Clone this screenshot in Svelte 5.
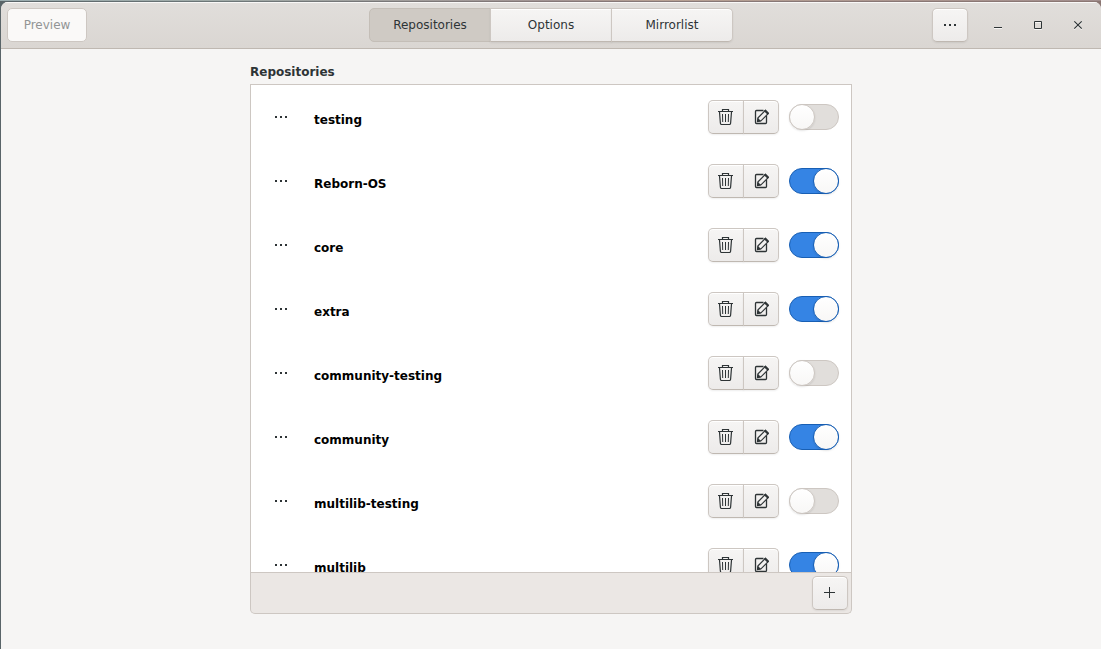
<script lang="ts">
	interface Repo {
		name: string;
		enabled: boolean;
	}

	const tabs = ['Repositories', 'Options', 'Mirrorlist'];

	let activeTab = $state('Repositories');
	let repos = $state<Repo[]>([
		{ name: 'testing', enabled: false },
		{ name: 'Reborn-OS', enabled: true },
		{ name: 'core', enabled: true },
		{ name: 'extra', enabled: true },
		{ name: 'community-testing', enabled: false },
		{ name: 'community', enabled: true },
		{ name: 'multilib-testing', enabled: false },
		{ name: 'multilib', enabled: true }
	]);

	function remove(repo: Repo): void {
		repos = repos.filter((r) => r !== repo);
	}
</script>

{#snippet dots()}
	<svg viewBox="0 0 16 16" aria-hidden="true">
		<path d="M2 7h2v2H2zM7 7h2v2H7zM12 7h2v2h-2z" fill="currentColor" />
	</svg>
{/snippet}

<div class="desktop">
	<div class="window">
		<header>
			<div class="start">
				<button class="btn preview" disabled>Preview</button>
			</div>

			<nav class="linked">
				{#each tabs as tab}
					<button
						class="btn tab"
						class:active={tab === activeTab}
						aria-pressed={tab === activeTab}
						onclick={() => (activeTab = tab)}>{tab}</button
					>
				{/each}
			</nav>

			<div class="end">
				<button class="btn icon" aria-label="Menu">{@render dots()}</button>
				<div class="controls">
					<button class="flat" aria-label="Minimize">
						<svg viewBox="0 0 16 16"><path d="M4 10h8v1H4z" fill="currentColor" /></svg>
					</button>
					<button class="flat" aria-label="Maximize">
						<svg viewBox="0 0 16 16">
							<path d="M4.5 4.5h7v7h-7z" fill="none" stroke="currentColor" />
						</svg>
					</button>
					<button class="flat" aria-label="Close">
						<svg viewBox="0 0 16 16">
							<path
								d="M4.3 4.3l7.4 7.4M11.700 4.3l-7.400 7.400"
								fill="none"
								stroke="currentColor"
								stroke-width="1.2"
							/>
						</svg>
					</button>
				</div>
			</div>
		</header>

		<main>
			<h1>Repositories</h1>
			<ul>
				{#each repos as repo, i (repo.name)}
					<li>
						<button class="flat handle" aria-label="Move {repo.name}">{@render dots()}</button>
						<label for="repo-{i}">{repo.name}</label>
						<div class="linked">
							<button
								class="btn icon"
								aria-label="Delete {repo.name}"
								onclick={() => remove(repo)}
							>
								<svg viewBox="0 0 16 16" fill="none" stroke="currentColor">
									<path d="M0 2.5h15M4.5 2.5v-2h6v2" stroke-width="1.2" />
									<path
										d="M1.5 3l.9 11.300q.1 1.200 1.200 1.200h7.800q1.100 0 1.200-1.200l.9-11.300"
										stroke-width="1.200"
									/>
									<path d="M4.500 5l.2 8M7.500 5v8M10.500 5l-.2 8" />
								</svg>
							</button>
							<button class="btn icon" aria-label="Edit {repo.name}">
								<svg viewBox="0 0 16 16" fill="none" stroke="currentColor">
									<path
										d="M10.500 1.500h-7q-1 0-1 1v11q0 1 1 1h9q1 0 1-1v-6.500"
										stroke-width="1.300"
									/>
									<path d="M4.500 12.500l.5-3.700 7.400-7.400 3 3-7.400 7.400z" stroke-width="1.200" />
									<path
										d="M4 13l.7-4.300 3.600 3.600zM10.800 2l1.700-1.500 3.500 3.500-1.600 1.600z"
										fill="currentColor"
										stroke="none"
									/>
								</svg>
							</button>
						</div>
						<input id="repo-{i}" type="checkbox" role="switch" bind:checked={repo.enabled} />
					</li>
				{/each}
			</ul>
			<footer>
				<button class="btn icon" aria-label="Add repository">
					<svg viewBox="0 0 16 16"><path d="M7 2h1v5h5v1H8v5H7V8H2V7h5z" fill="currentColor" /></svg>
				</button>
			</footer>
		</main>
	</div>
</div>

<style>
	:global(body) {
		margin: 0;
	}

	.desktop {
		box-sizing: border-box;
		height: 100vh;
		padding: 2px 0 0 1px;
		background:
			linear-gradient(90deg, #9aacaf, #a0aaa7 20%, #a29493 50%, #b8a193 60%, #a18d8c) top / 100% 1px
				no-repeat,
			linear-gradient(90deg, #596468, #6d7778 20%, #857878 50%, #8b7773);
		font-family: 'DejaVu Sans', sans-serif;
		font-size: 12px;
		line-height: 16px;
		color: #2e3436;
	}

	.window {
		display: flex;
		flex-direction: column;
		height: 100%;
		background: #f6f5f4;
		border-radius: 7px 7px 0 0;
		overflow: hidden;
	}

	header {
		display: grid;
		grid-template-columns: 1fr auto 1fr;
		align-items: center;
		padding: 6px;
		background: linear-gradient(#e1dedb, #dad6d2);
		border-bottom: 1px solid #bfb8b1;
		box-shadow: inset 0 1px #f9f8f7;
	}

	.start,
	.end,
	.controls,
	.linked {
		display: flex;
	}

	.end {
		justify-content: flex-end;
		gap: 13px;
	}

	.controls {
		gap: 6px;
	}

	button {
		box-sizing: border-box;
		height: 34px;
		margin: 0;
		padding: 0;
		font: inherit;
		color: inherit;
	}

	svg {
		display: block;
		width: 16px;
		height: 16px;
		margin: auto;
	}

	.btn {
		border: 1px solid #cdc7c2;
		border-bottom-color: #bfb8b1;
		border-radius: 5px;
		background: linear-gradient(#f6f5f4, #edebea);
		box-shadow:
			inset 0 1px #fff,
			0 1px 2px rgba(0, 0, 0, 0.07);
	}

	.btn.icon {
		width: 36px;
	}

	.preview {
		width: 80px;
		border-color: #cdc7c2;
		background: #faf9f8;
		box-shadow: none;
		color: #929595;
	}

	.tab {
		width: 122px;
	}

	.tab.active {
		background: #cfcac4;
		border-color: #c4beb7;
		box-shadow: none;
	}

	.linked .btn + .btn {
		margin-left: -1px;
	}

	.linked .btn:not(:first-child) {
		border-top-left-radius: 0;
		border-bottom-left-radius: 0;
	}

	.linked .btn:not(:last-child) {
		border-top-right-radius: 0;
		border-bottom-right-radius: 0;
	}

	.flat {
		width: 34px;
		border: 0;
		background: none;
	}

	.controls svg {
		filter: drop-shadow(0 1px rgba(255, 255, 255, 0.75));
	}

	main {
		flex: 1;
		min-height: 0;
		display: flex;
		flex-direction: column;
		box-sizing: border-box;
		width: 100%;
		max-width: 602px;
		margin: 0 auto;
		padding: 15px 0 35px;
	}

	h1 {
		margin: 0 0 4px;
		font-size: 12px;
		line-height: 16px;
	}

	ul {
		flex: 1;
		min-height: 0;
		margin: 0;
		padding: 0;
		list-style: none;
		overflow-y: auto;
		scrollbar-width: none;
		background: #fff;
		border: 1px solid #cdc7c2;
	}

	li {
		display: flex;
		align-items: center;
		height: 64px;
		padding: 0 12px;
	}

	.handle {
		width: 36px;
	}

	label {
		flex: 1;
		padding: 6px 0 0 15px;
		font-weight: bold;
		color: #000;
	}

	input {
		appearance: none;
		box-sizing: border-box;
		width: 50px;
		height: 26px;
		margin: 0 0 0 10px;
		border: 1px solid #cdc7c2;
		border-radius: 13px;
		background: #e1dedb;
	}

	input::before {
		content: '';
		display: block;
		box-sizing: border-box;
		width: 26px;
		height: 26px;
		margin: -1px;
		border: 1px solid #cdc7c2;
		border-radius: 50%;
		background: linear-gradient(#fff, #f8f7f6);
		box-shadow: 0 1px 2px rgba(0, 0, 0, 0.1);
	}

	input:checked {
		border-color: #185fb4;
		background: #3584e4;
	}

	input:checked::before {
		margin-left: 23px;
		border-color: #185fb4;
	}

	footer {
		display: flex;
		justify-content: flex-end;
		padding: 3px;
		background: #ebe7e4;
		border: 1px solid #cdc7c2;
		border-top: 0;
		border-radius: 0 0 5px 5px;
	}
</style>
